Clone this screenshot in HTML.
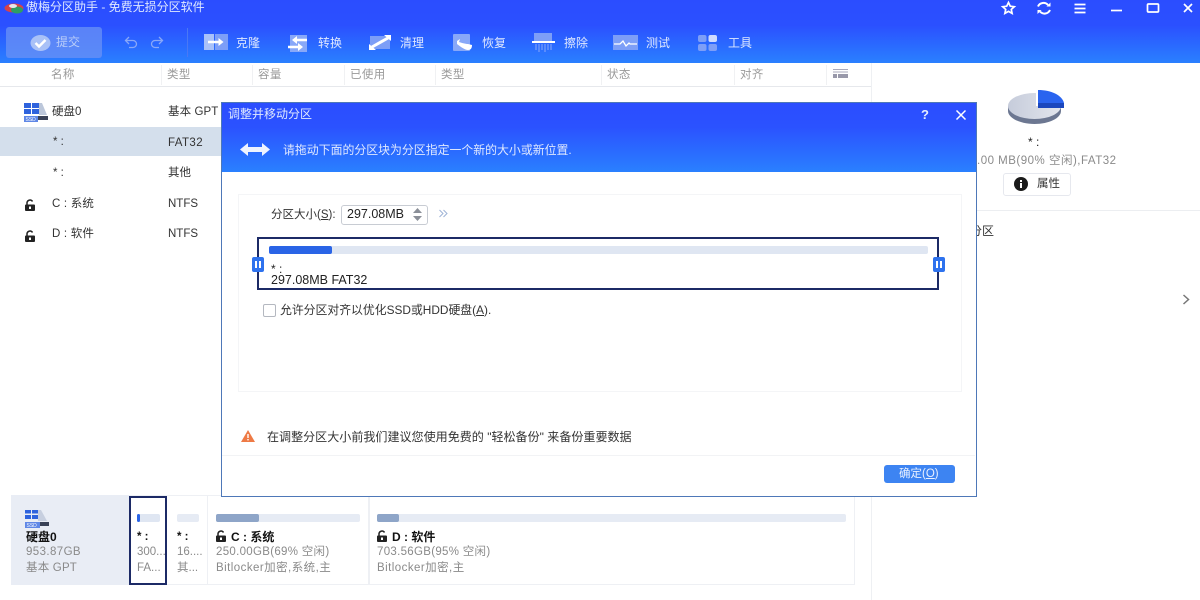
<!DOCTYPE html>
<html lang="zh"><head><meta charset="utf-8"><title>傲梅分区助手</title>
<style>
html,body{margin:0;padding:0;background:#fff}
#p{position:relative;width:1200px;height:600px;overflow:hidden;background:#fff;font-family:"Liberation Sans","Noto Sans CJK SC",sans-serif;font-size:11.5px;color:#444;filter:blur(.35px)}
.t,.b{position:absolute;white-space:nowrap;line-height:14px}
.b{display:block}
.w{color:#dfe8ff;font-size:12px}
.g{color:#8a8a8a}
.k{color:#333}
.h{color:#999;letter-spacing:.4px}
svg{position:absolute;overflow:visible}
u{text-decoration:underline}
</style></head><body><div id="p">
<div class="b" style="left:0;top:0;width:1200px;height:63px;background:linear-gradient(#2b4dff,#2b50ff 40%,#2a80ff)"></div>
<svg style="left:2px;top:3px" width="24" height="12" viewBox="0 0 24 12"><ellipse cx="12" cy="5" rx="9.5" ry="4.5" fill="#d8424a"/><ellipse cx="15" cy="7" rx="6" ry="3.500" fill="#2f9e62"/><ellipse cx="11" cy="3" rx="4" ry="2" fill="#e8e8e8"/></svg>
<span class="t w" style="left:26px;top:0px">傲梅分区助手 - 免费无损分区软件</span>
<svg style="left:1001px;top:0px" width="190" height="17" viewBox="0 0 190 17" fill="none" stroke="#fff" stroke-width="1.7"><path d="M7.500 2.500l1.800 3.700 4 .5-3 2.700.8 4-3.600-2-3.600 2 .8-4-3-2.700 4-.5z"/><path d="M37 6.500a6 6 0 0 1 10-1.500M49 10a6 6 0 0 1-10 1.500" stroke-width="2"/><path d="M49.500 2.500v4h-4zM36.500 14v-4h4z" fill="#fff" stroke="none"/><path d="M73.500 4.500h11M73.500 8.500h11M73.500 12.500h11"/><path d="M110 10.500h11"/><rect x="146.500" y="4" width="11" height="8" rx="1"/><path d="M183 4l8 8M191 4l-8 8"/></svg>

<div class="b" style="left:6px;top:27px;width:96px;height:31px;border-radius:3px;background:#6b92f5;opacity:.75"></div>
<svg style="left:30px;top:34px" width="21" height="18" viewBox="0 0 21 18"><ellipse cx="10.500" cy="9" rx="10" ry="8" fill="#a9c1f7"/><path d="M5.500 9l3.500 3.500 6.500-6.500" fill="none" stroke="#fff" stroke-width="2.500"/></svg>
<span class="t" style="left:56px;top:35px;color:#b9cdf9;font-size:12px">提交</span>
<svg style="left:124px;top:36px" width="42" height="12" viewBox="0 0 42 12" fill="none" stroke="#89a8f8" stroke-width="1.300"><path d="M2 4.500h7a3.500 3.500 0 0 1 0 7H5"/><path d="M5 1L1.500 4.500 5 8"/><path d="M38 4.500h-7a3.500 3.500 0 0 0 0 7h4"/><path d="M35 1l3.500 3.500L35 8"/></svg>
<div class="b" style="left:187px;top:28px;width:1px;height:29px;background:#4a78f5"></div>

<svg style="left:204px;top:34px" width="24" height="16" viewBox="0 0 24 16"><rect width="10" height="16" fill="#a9c1f9"/><rect x="11" width="13" height="16" fill="#7d9ef7"/><path d="M4 8h12" stroke="#fff" stroke-width="2.500"/><path d="M14.500 4l5 4-5 4z" fill="#fff"/></svg>
<span class="t w" style="left:236px;top:36px">克隆</span>
<svg style="left:288px;top:34px" width="20" height="19" viewBox="0 0 20 19"><rect x="2" y="1" width="17" height="17" fill="#88a8f8"/><path d="M8 6h11M0 13h11" stroke="#fff" stroke-width="2.500"/><path d="M9 2L4 6l5 4zM10 9l5 4-5 4z" fill="#fff"/></svg>
<span class="t w" style="left:318px;top:36px">转换</span>
<svg style="left:369px;top:35px" width="22" height="15" viewBox="0 0 22 15"><rect x="1" y="1" width="20" height="13" fill="#7d9ef7"/><path d="M3 12L19 3" stroke="#fff" stroke-width="3"/><path d="M15 0h7v6zM0 9l7 6H0z" fill="#fff"/></svg>
<span class="t w" style="left:400px;top:36px">清理</span>
<svg style="left:453px;top:34px" width="20" height="18" viewBox="0 0 20 18"><rect width="17" height="17" rx="1" fill="#88a8f8"/><path d="M4 7l3-2-1 3c3 1 7 2 9 2l4 1c0 3-1 5-4 5-3 0-7-3-11-6z" fill="#fff"/></svg>
<span class="t w" style="left:482px;top:36px">恢复</span>
<svg style="left:532px;top:33px" width="23" height="19" viewBox="0 0 23 19"><rect x="2" width="18" height="8" fill="#7d9ef7"/><rect y="8" width="23" height="2" fill="#fff"/><path d="M4 11v6M7 11v8M10 11v6M13 11v8M16 11v6M19 11v6" stroke="#8aa8f8"/></svg>
<span class="t w" style="left:564px;top:36px">擦除</span>
<svg style="left:613px;top:35px" width="25" height="15" viewBox="0 0 25 15"><rect width="25" height="15" fill="#7d9ef7"/><path d="M1 9h6l3-3 3 5 3-3 1 1h7" stroke="#fff" stroke-width="1.300" fill="none"/></svg>
<span class="t w" style="left:646px;top:36px">测试</span>
<svg style="left:698px;top:35px" width="20" height="16" viewBox="0 0 20 16"><rect width="8.500" height="7" rx="2" fill="#7d9ef7"/><rect x="10.500" width="8.500" height="7" rx="2" fill="#cfdcff"/><rect y="9" width="8.500" height="7" rx="2" fill="#7d9ef7"/><rect x="10.500" y="9" width="8.500" height="7" rx="2" fill="#7d9ef7"/></svg>
<span class="t w" style="left:728px;top:36px">工具</span>

<!-- table head -->
<div class="b" style="left:0;top:86px;width:871px;height:1px;background:#e6e8ec"></div>
<div class="b" style="left:871px;top:63px;width:1px;height:537px;background:#eef0f3"></div>
<div class="b" style="left:161px;top:65px;width:1px;height:20px;background:#f0f1f3"></div>
<div class="b" style="left:252px;top:65px;width:1px;height:20px;background:#f0f1f3"></div>
<div class="b" style="left:344px;top:65px;width:1px;height:20px;background:#f0f1f3"></div>
<div class="b" style="left:435px;top:65px;width:1px;height:20px;background:#f0f1f3"></div>
<div class="b" style="left:601px;top:65px;width:1px;height:20px;background:#f0f1f3"></div>
<div class="b" style="left:734px;top:65px;width:1px;height:20px;background:#f0f1f3"></div>
<div class="b" style="left:826px;top:65px;width:1px;height:20px;background:#f0f1f3"></div>
<span class="t h" style="left:51px;top:68px">名称</span>
<span class="t h" style="left:167px;top:68px">类型</span>
<span class="t h" style="left:258px;top:68px">容量</span>
<span class="t h" style="left:350px;top:68px">已使用</span>
<span class="t h" style="left:441px;top:68px">类型</span>
<span class="t h" style="left:607px;top:68px">状态</span>
<span class="t h" style="left:740px;top:68px">对齐</span>
<svg style="left:833px;top:69px" width="16" height="10" viewBox="0 0 16 10"><path d="M0 .500h15M0 3h15" stroke="#aab" /><rect y="5" width="4" height="4" fill="#99a"/><rect x="5" y="5" width="10" height="4" fill="#99a"/></svg>

<!-- rows -->
<div class="b" style="left:0;top:127px;width:221px;height:29px;background:#d4dfec"></div>
<svg style="left:24px;top:103px" width="24" height="19" viewBox="0 0 24 19"><rect width="7" height="5" fill="#2f63dd"/><rect x="8" width="7" height="5" fill="#2f63dd"/><rect y="6" width="7" height="5" fill="#2f63dd"/><rect x="8" y="6" width="7" height="5" fill="#2f63dd"/><path d="M15 0h3l5 12H15z" fill="#bcc7da"/><rect y="13" width="14" height="6" fill="#5f87e6"/><rect x="14" y="13" width="10" height="4" fill="#3a4257"/><text x="1.500" y="18" font-size="5" fill="#fff" font-family="Liberation Sans">SSD</text></svg>
<span class="t k" style="left:52px;top:105px">硬盘0</span>
<span class="t k" style="left:168px;top:105px;letter-spacing:.1px">基本 GPT</span>
<span class="t k" style="left:53px;top:135px">* :</span>
<span class="t k" style="left:168px;top:136px;letter-spacing:.4px">FAT32</span>
<span class="t k" style="left:53px;top:166px">* :</span>
<span class="t k" style="left:168px;top:166px">其他</span>
<svg style="left:25px;top:199px" width="10" height="12" viewBox="0 0 10 12"><path d="M2 6V3.500a3 3 0 0 1 5.500-1" fill="none" stroke="#222" stroke-width="1.500"/><rect y="5.500" width="10" height="6.500" rx="1" fill="#222"/><rect x="4" y="7.500" width="2" height="2.500" fill="#fff"/></svg>
<span class="t k" style="left:52px;top:197px;letter-spacing:.2px">C : 系统</span>
<span class="t k" style="left:168px;top:197px">NTFS</span>
<svg style="left:25px;top:230px" width="10" height="12" viewBox="0 0 10 12"><path d="M2 6V3.500a3 3 0 0 1 5.500-1" fill="none" stroke="#222" stroke-width="1.500"/><rect y="5.500" width="10" height="6.500" rx="1" fill="#222"/><rect x="4" y="7.500" width="2" height="2.500" fill="#fff"/></svg>
<span class="t k" style="left:52px;top:227px;letter-spacing:.2px">D : 软件</span>
<span class="t k" style="left:168px;top:227px">NTFS</span>

<!-- right panel -->
<svg style="left:1006px;top:89px" width="60" height="37" viewBox="0 0 60 37"><defs><linearGradient id="gp" x1="0" x2="1" y1="0" y2="0"><stop offset="0" stop-color="#c6ccdb"/><stop offset="1" stop-color="#e2e5ec"/></linearGradient></defs><path d="M2 17v5c0 7 12 13 26.500 13S55 29 55 22v-5z" fill="#6c7791"/><ellipse cx="28.500" cy="17" rx="26.500" ry="13" fill="url(#gp)"/><path d="M32 1c13 0 24 5 26 13v5H32z" fill="#2a64ef"/><path d="M32 14h26v5H32z" fill="#1b47bd"/><path d="M30 3h2v14h-2z" fill="#fff"/></svg>
<span class="t" style="left:1028px;top:135px;color:#222;font-size:12px">* :</span>
<span class="t g" style="left:977px;top:154px;letter-spacing:.5px">.00 MB(90% 空闲),FAT32</span>
<div class="b" style="left:1003px;top:173px;width:66px;height:21px;border:1px solid #e6e8ee;border-radius:3px"></div>
<svg style="left:1014px;top:177px" width="14" height="14" viewBox="0 0 14 14"><circle cx="7" cy="7" r="7" fill="#1a1a1a"/><rect x="6" y="6" width="2" height="5" fill="#fff"/><rect x="6" y="3" width="2" height="2" fill="#fff"/></svg>
<span class="t k" style="left:1037px;top:177px">属性</span>
<div class="b" style="left:977px;top:210px;width:223px;height:1px;background:#eceef1"></div>
<span class="t k" style="left:975px;top:224px;font-size:12px;width:24px;overflow:hidden"><span style="margin-left:-5px">分区</span></span>
<svg style="left:1182px;top:294px" width="8" height="11" viewBox="0 0 8 11"><path d="M1.500 1l5 4.500-5 4.500" fill="none" stroke="#777" stroke-width="1.500"/></svg>

<!-- bottom -->
<div class="b" style="left:11px;top:495px;width:844px;height:90px;background:#eef0f4"></div>
<div class="b" style="left:11px;top:495px;width:118px;height:90px;background:#e9edf5"></div>
<div class="b" style="left:129px;top:496px;width:37px;height:88px;background:#fff"></div>
<div class="b" style="left:167px;top:496px;width:40px;height:88px;background:#fff"></div>
<div class="b" style="left:208px;top:496px;width:160px;height:88px;background:#fff"></div>
<div class="b" style="left:370px;top:496px;width:484px;height:88px;background:#fff"></div>
<div class="b" style="left:129px;top:496px;width:34px;height:85px;border:2px solid #1c2a66"></div>
<svg style="left:25px;top:510px" width="24" height="18" viewBox="0 0 24 18"><rect width="6" height="3.500" fill="#2f63dd"/><rect x="7" width="6" height="3.500" fill="#2f63dd"/><rect y="5" width="6" height="4" fill="#2f63dd"/><rect x="7" y="5" width="6" height="4" fill="#2f63dd"/><path d="M13 0h3l6 11H13z" fill="#c7cfdf"/><rect y="12" width="15" height="6" fill="#5f87e6"/><rect x="15" y="12" width="9" height="4" fill="#3a4257"/><text x="1.500" y="17" font-size="5" fill="#fff" font-family="Liberation Sans">SSD</text></svg>
<span class="t" style="left:26px;top:530px;color:#111;font-weight:bold;font-size:12px">硬盘0</span>
<span class="t g" style="left:26px;top:545px;letter-spacing:.4px">953.87GB</span>
<span class="t g" style="left:26px;top:561px;letter-spacing:.2px">基本 GPT</span>

<div class="b" style="left:137px;top:514px;width:23px;height:8px;border-radius:2px;background:#dfe6f2"></div>
<div class="b" style="left:137px;top:514px;width:3px;height:8px;border-radius:2px;background:#2a64e6"></div>
<span class="t" style="left:137px;top:530px;color:#111;font-weight:bold">* :</span>
<span class="t g" style="left:137px;top:545px">300...</span>
<span class="t g" style="left:137px;top:561px">FA...</span>

<div class="b" style="left:177px;top:514px;width:22px;height:8px;border-radius:2px;background:#e6ebf4"></div>
<span class="t" style="left:177px;top:530px;color:#111;font-weight:bold">* :</span>
<span class="t g" style="left:177px;top:545px">16....</span>
<span class="t g" style="left:177px;top:561px">其...</span>

<div class="b" style="left:216px;top:514px;width:144px;height:8px;border-radius:2px;background:#e6ebf4"></div>
<div class="b" style="left:216px;top:514px;width:43px;height:8px;border-radius:2px;background:#8ea5c8"></div>
<svg style="left:216px;top:530px" width="10" height="12" viewBox="0 0 10 12"><path d="M2 6V3.500a3 3 0 0 1 5.500-1" fill="none" stroke="#222" stroke-width="1.500"/><rect y="5.500" width="10" height="6.500" rx="1" fill="#222"/><rect x="4" y="7.500" width="2" height="2.500" fill="#fff"/></svg>
<span class="t" style="left:231px;top:530px;color:#111;font-weight:bold;font-size:12px">C : 系统</span>
<span class="t g" style="left:216px;top:545px;letter-spacing:.3px">250.00GB(69% 空闲)</span>
<span class="t g" style="left:216px;top:561px;letter-spacing:.45px">Bitlocker加密,系统,主</span>

<div class="b" style="left:377px;top:514px;width:469px;height:8px;border-radius:2px;background:#e6ebf4"></div>
<div class="b" style="left:377px;top:514px;width:22px;height:8px;border-radius:2px;background:#8ea5c8"></div>
<svg style="left:377px;top:530px" width="10" height="12" viewBox="0 0 10 12"><path d="M2 6V3.500a3 3 0 0 1 5.500-1" fill="none" stroke="#222" stroke-width="1.500"/><rect y="5.500" width="10" height="6.500" rx="1" fill="#222"/><rect x="4" y="7.500" width="2" height="2.500" fill="#fff"/></svg>
<span class="t" style="left:392px;top:530px;color:#111;font-weight:bold;font-size:12px">D : 软件</span>
<span class="t g" style="left:377px;top:545px;letter-spacing:.3px">703.56GB(95% 空闲)</span>
<span class="t g" style="left:377px;top:561px;letter-spacing:.45px">Bitlocker加密,主</span>

<!-- dialog -->
<div class="b" style="left:221px;top:102px;width:754px;height:393px;background:#fff;border:1.500px solid #4e78b8"></div>
<div class="b" style="left:222px;top:103px;width:753.500px;height:69px;background:linear-gradient(#2b4dff,#2b52ff 35%,#2a80ff)"></div>
<span class="t w" style="left:228px;top:107px">调整并移动分区</span>
<span class="t" style="left:921px;top:108px;color:#e6edff;font-size:13px;font-weight:bold">?</span>
<svg style="left:956px;top:110px" width="10" height="10" viewBox="0 0 10 10"><path d="M.500.500l9 9M9.500.500l-9 9" stroke="#fff" stroke-width="1.500"/></svg>
<svg style="left:240px;top:142px" width="30" height="15" viewBox="0 0 30 15"><path d="M0 7.500L8 1v4h14V1l8 6.500L22 14v-4H8v4z" fill="#eef3ff"/></svg>
<span class="t w" style="left:283px;top:143px;font-size:11.900px">请拖动下面的分区块为分区指定一个新的大小或新位置.</span>

<div class="b" style="left:238px;top:194px;width:722px;height:196px;border:1px solid #f4f5f7"></div>
<span class="t k" style="left:271px;top:208px">分区大小(<u>S</u>):</span>
<div class="b" style="left:341px;top:205px;width:85px;height:18px;border:1px solid #c8ccd3;border-radius:3px"></div>
<span class="t" style="left:347px;top:207px;color:#222;font-size:12.500px">297.08MB</span>
<svg style="left:413px;top:208px" width="9" height="13" viewBox="0 0 9 13"><path d="M4.500 0L9 5H0zM4.500 13L0 8h9z" fill="#8b8f98"/></svg>
<svg style="left:439px;top:209px" width="9" height="9" viewBox="0 0 9 9"><path d="M.500 1l3.500 3.500L.500 8M4.500 1L8 4.500 4.500 8" fill="none" stroke="#9db2d6"/></svg>

<div class="b" style="left:257px;top:237px;width:678px;height:49px;border:2px solid #1c2a66"></div>
<div class="b" style="left:269px;top:246px;width:659px;height:8px;border-radius:2px;background:#dfe6f2"></div>
<div class="b" style="left:269px;top:246px;width:63px;height:8px;border-radius:2px;background:#2a64e6"></div>
<div class="b" style="left:252px;top:257px;width:12px;height:15px;border-radius:2px;background:#2e72ee"></div>
<div class="b" style="left:255px;top:261px;width:2px;height:7px;background:#fff"></div>
<div class="b" style="left:259px;top:261px;width:2px;height:7px;background:#fff"></div>
<div class="b" style="left:933px;top:257px;width:12px;height:15px;border-radius:2px;background:#2e72ee"></div>
<div class="b" style="left:936px;top:261px;width:2px;height:7px;background:#fff"></div>
<div class="b" style="left:940px;top:261px;width:2px;height:7px;background:#fff"></div>
<span class="t" style="left:271px;top:262px;color:#222;font-size:12px">* :</span>
<span class="t" style="left:271px;top:273px;color:#222;font-size:12.500px">297.08MB FAT32</span>

<div class="b" style="left:263px;top:304px;width:11px;height:11px;border:1px solid #b4b8c0;border-radius:2px"></div>
<span class="t k" style="left:280px;top:303px;font-size:11.850px">允许分区对齐以优化SSD或HDD硬盘(<u>A</u>).</span>

<svg style="left:241px;top:430px" width="14" height="12" viewBox="0 0 14 12"><path d="M7 0l7 12H0z" fill="#ee7a45"/><rect x="6.300" y="4" width="1.400" height="4" fill="#fff"/><rect x="6.300" y="9" width="1.400" height="1.400" fill="#fff"/></svg>
<span class="t k" style="left:267px;top:430px;font-size:12.050px">在调整分区大小前我们建议您使用免费的 "轻松备份" 来备份重要数据</span>

<div class="b" style="left:222px;top:455px;width:753px;height:1px;background:#f2f3f5"></div>
<div class="b" style="left:884px;top:465px;width:71px;height:18px;border-radius:3px;background:#3d84f2"></div>
<span class="t" style="left:899px;top:467px;color:#e8f0ff;font-size:11.500px">确定(<u>O</u>)</span>
</div></body></html>
